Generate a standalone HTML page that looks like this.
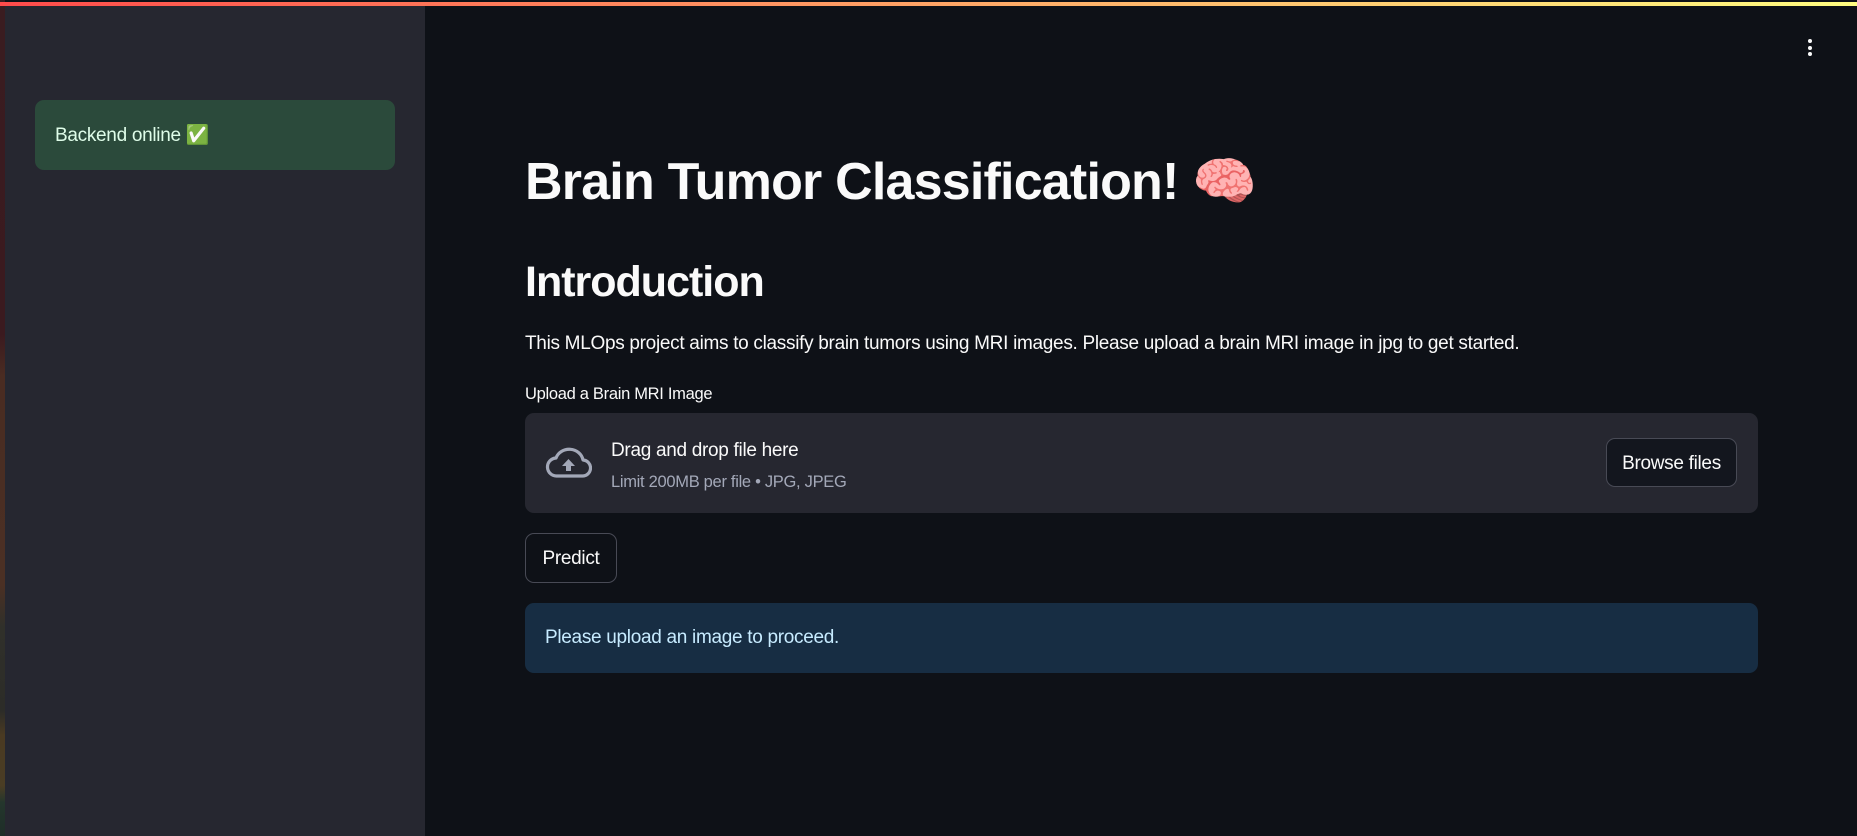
<!DOCTYPE html>
<html><head><meta charset="utf-8"><style>
*{box-sizing:border-box;margin:0;padding:0}
html,body{width:1857px;height:836px;overflow:hidden;background:#0e1117;font-family:"Source Sans Pro","Liberation Sans",sans-serif;color:#fafafa}
.edge{position:absolute;left:0;top:0;width:5px;height:836px;background:linear-gradient(#3a1c20 0%,#3b1a1f 40%,#4a2c22 45%,#4b3024 70%,#30302a 75%,#2c2c28 85%,#4a3a22 88%,#4a3d24 94%,#24362c 96%,#1e2d28 100%)}
.topbar{position:absolute;left:0;top:2px;width:1857px;height:4px;background:linear-gradient(90deg,#ff4b4b,#fffd80)}
.side{position:absolute;left:5px;top:6px;width:420px;height:830px;background:#262730}
.ok{position:absolute;left:35px;top:100px;width:360px;height:70px;background:#2b4a3b;border-radius:9px;color:#dffde9;font-size:19px;padding-left:20px;line-height:72px;letter-spacing:-0.3px}
.dots{position:absolute;left:1808px;top:39px}
.dots i{display:block;width:4px;height:4px;border-radius:50%;background:#fafafa;margin-bottom:2.5px}
h1{position:absolute;left:525px;top:150px;font-size:52px;font-weight:700;line-height:64px;white-space:nowrap;letter-spacing:-0.8px}
h2{position:absolute;left:525px;top:255px;font-size:43px;font-weight:600;line-height:54px;letter-spacing:-1px}
.p{position:absolute;left:525px;top:332px;font-size:19px;line-height:24px;letter-spacing:-0.3px;white-space:nowrap}
.lbl{position:absolute;left:525px;top:384px;font-size:16.5px;line-height:20px;letter-spacing:-0.3px}
.up{position:absolute;left:525px;top:413px;width:1233px;height:100px;background:#262730;border-radius:9px}
.up svg{position:absolute;left:20px;top:34px}
.t1{position:absolute;left:86px;top:27px;font-size:19px;letter-spacing:-0.3px}
.t2{position:absolute;left:86px;top:60px;font-size:16.5px;color:#a3a8b8;letter-spacing:-0.3px}
.btn{position:absolute;border:1px solid #484a55;border-radius:9px;background:#13161e;color:#fafafa;font-size:19px;text-align:center;letter-spacing:-0.3px}
.info{position:absolute;left:525px;top:603px;width:1233px;height:70px;background:#172d43;border-radius:9px;color:#c7ebff;font-size:19px;line-height:70px;padding-left:20px;letter-spacing:-0.3px}
</style></head><body>
<div class="edge"></div>
<div class="topbar"></div>
<div class="side"></div>
<div class="ok">Backend online ✅</div>
<div class="dots"><i></i><i></i><i></i></div>
<h1>Brain Tumor Classification! 🧠</h1>
<h2>Introduction</h2>
<div class="p">This MLOps project aims to classify brain tumors using MRI images. Please upload a brain MRI image in jpg to get started.</div>
<div class="lbl">Upload a Brain MRI Image</div>
<div class="up">
<svg width="47" height="32" viewBox="0 0 47 32"><path d="M12 29 H37 A8 8 0 0 0 38 13 A14 13 0 0 0 11 11 A9 9 0 0 0 12 29 Z" fill="none" stroke="#a3a8b8" stroke-width="3.2" stroke-linejoin="round"/><path d="M23.5 12 L17 19 H21 V24 H26 V19 H30 Z" fill="#a3a8b8"/></svg>
<div class="t1">Drag and drop file here</div>
<div class="t2">Limit 200MB per file • JPG, JPEG</div>
</div>
<div class="btn" style="left:1606px;top:438px;width:131px;height:49px;line-height:49px">Browse files</div>
<div class="btn" style="left:525px;top:533px;width:92px;height:50px;line-height:50px;background:#0e1117">Predict</div>
<div class="info">Please upload an image to proceed.</div>
</body></html>
